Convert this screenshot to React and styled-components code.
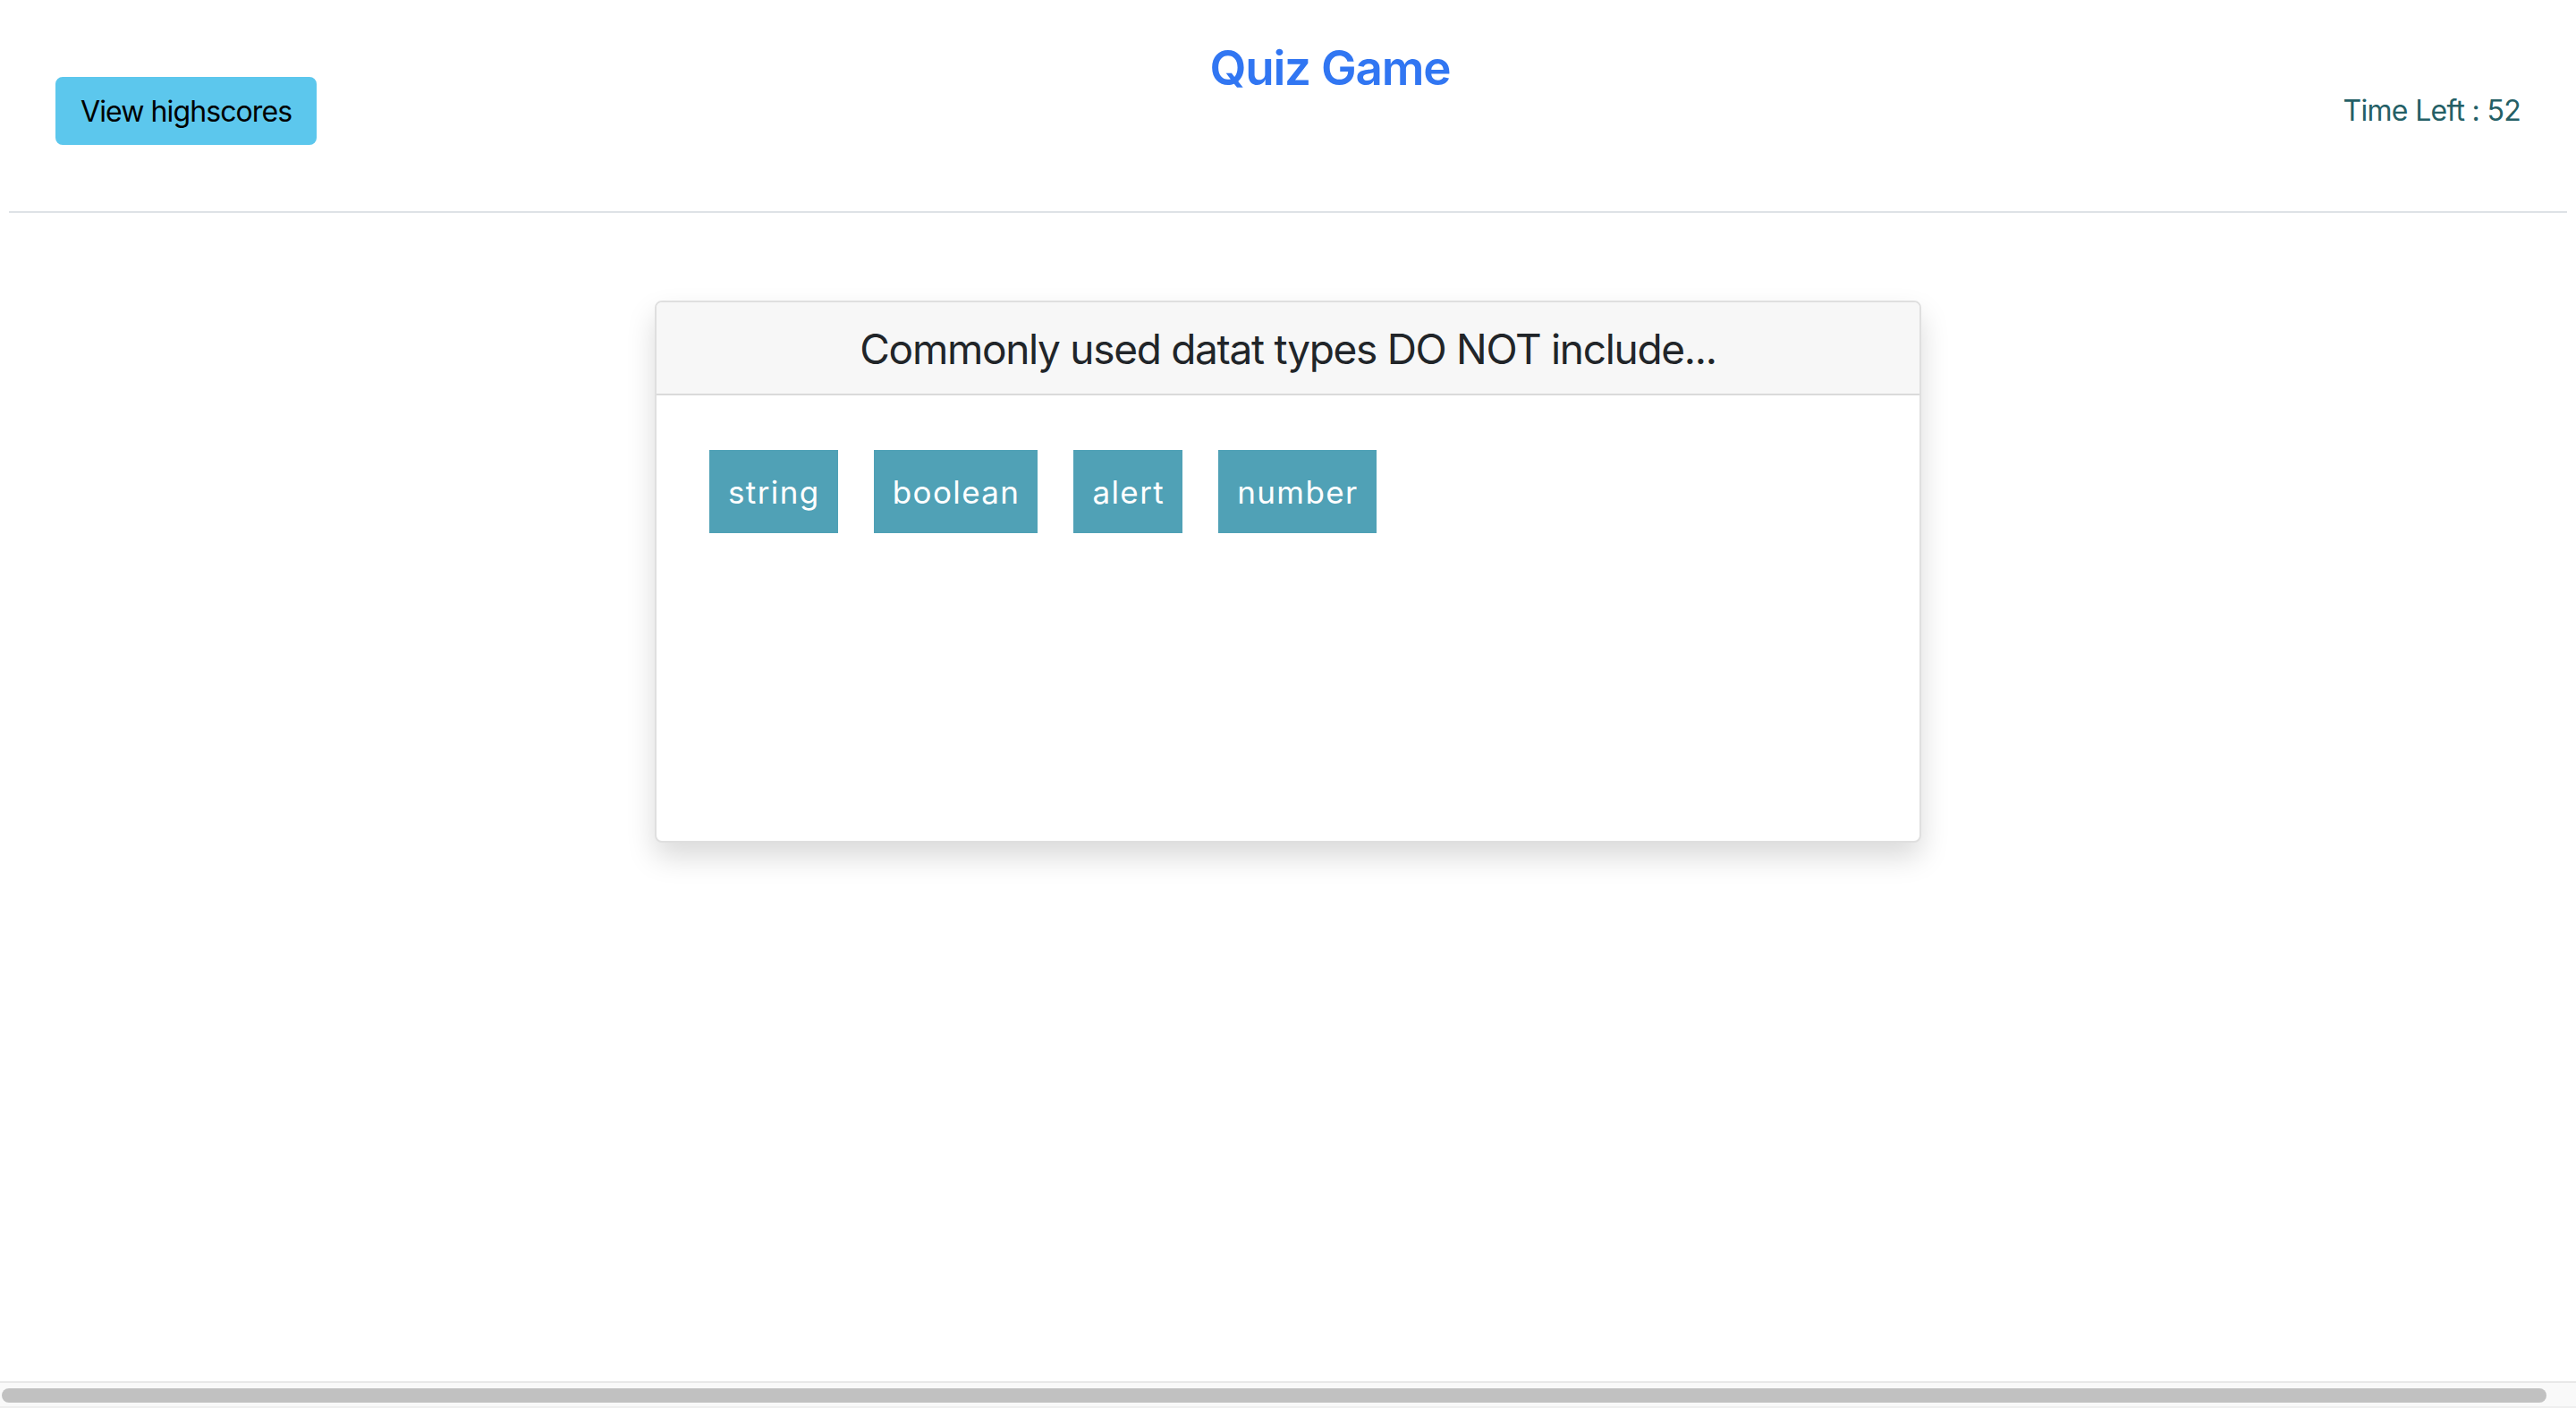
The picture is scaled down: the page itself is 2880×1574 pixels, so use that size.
import styled, { createGlobalStyle } from "styled-components";

const GlobalStyle = createGlobalStyle`
  html, body {
    margin: 0;
    background: #fff;
  }
  body {
    font-family: Inter, "Liberation Sans", sans-serif;
    color: #212529;
  }
`;

const Page = styled.div`
    min-height: 100vh;
    padding: 0 10px;
`;

const Header = styled.header`
    height: 238px;
    box-sizing: border-box;
    padding: 12px 52px 0;
    display: flex;
    justify-content: space-between;
    align-items: center;
    border-bottom: 2px solid #dee2e6;
`;

const HighscoreButton = styled.button`
    height: 76px;
    padding: 0 26px;
    font-family: inherit;
    font-size: 32px;
    letter-spacing: -0.9px;
    color: #000;
    background: #5cc7ed;
    border: 2px solid #5cc7ed;
    border-radius: 8px;
    cursor: pointer;
`;

const Title = styled.h1`
    align-self: flex-start;
    margin: 33px 0 0;
    font-size: 53px;
    line-height: 1.2;
    font-weight: 600;
    letter-spacing: -1.2px;
    color: #3176f2;
`;

const Timer = styled.div`
    font-size: 32px;
    line-height: 1.5;
    letter-spacing: -0.7px;
    color: #245f66;
`;

const Main = styled.main`
    padding-bottom: 120px;
`;

const Card = styled.section`
    width: 1412px;
    margin: 98px auto 0;
    border: 2px solid #dfdfdf;
    border-radius: 8px;
    background: #fff;
    box-shadow: 0 16px 32px rgba(0, 0, 0, 0.15);
    overflow: hidden;
`;

const CardHeader = styled.div`
    padding: 25px 20px 22px;
    background: #f7f7f7;
    border-bottom: 2px solid #dadada;
    text-align: center;
    font-size: 46px;
    line-height: 1.2;
    letter-spacing: -1.3px;
    color: #212529;
`;

const CardBody = styled.div`
    height: 498px;
    box-sizing: border-box;
    padding: 61px 59px;
    display: flex;
    align-items: flex-start;
    gap: 40px;
`;

const Answer = styled.button`
    height: 93px;
    padding: 0 20px 0 21px;
    font-family: inherit;
    font-size: 35px;
    letter-spacing: 1.4px;
    color: #fff;
    background: #50a1b6;
    border: none;
    border-radius: 0;
    cursor: pointer;
`;

/* the browser's horizontal scrollbar seen at the bottom of the screenshot */
const ScrollTrack = styled.div`
    position: fixed;
    left: 0;
    right: 0;
    bottom: 0;
    height: 30px;
    box-sizing: border-box;
    background: #f9f9f9;
    border-top: 2px solid #e8e8e8;
    border-bottom: 2px solid #efefef;
    padding: 6px 33px 0 2px;
`;

const ScrollThumb = styled.div`
    height: 16px;
    border-radius: 8px;
    background: #c1c1c1;
`;

const answers = ["string", "boolean", "alert", "number"];

const App = () => {
    return (
        <Page>
            <GlobalStyle />
            <Header>
                <HighscoreButton>View highscores</HighscoreButton>
                <Title>Quiz Game</Title>
                <Timer>Time Left : 52</Timer>
            </Header>
            <Main>
                <Card>
                    <CardHeader>Commonly used datat types DO NOT include...</CardHeader>
                    <CardBody>
                        {answers.map((a) => (
                            <Answer key={a}>{a}</Answer>
                        ))}
                    </CardBody>
                </Card>
            </Main>
            <ScrollTrack>
                <ScrollThumb />
            </ScrollTrack>
        </Page>
    );
};

export default App;
